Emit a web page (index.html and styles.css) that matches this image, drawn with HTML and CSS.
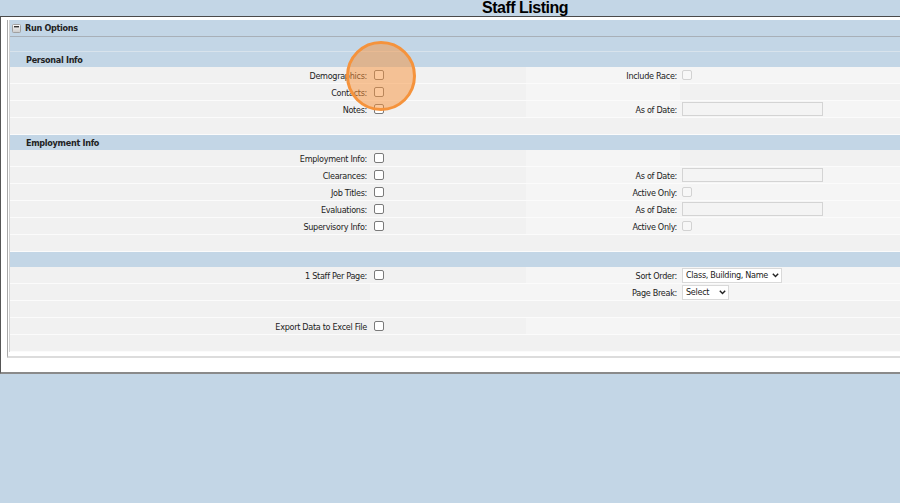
FILE: index.html
```
<!DOCTYPE html>
<html lang="en">
<head>
    <meta charset="UTF-8">
    <title>Staff Listing</title>
    <link rel="stylesheet" href="styles.css">
</head>
<body>
    <div class="pagina">
        <h1 class="titulo">Staff Listing</h1>

        <!-- Panel principal -->
        <div class="panel">
            <div class="marco">
                <div class="opciones">
                    <div class="barra-opciones">
                        <svg class="toggle" width="9" height="9" viewBox="0 0 9 9">
                            <defs>
                                <linearGradient id="grad" x1="0" y1="0" x2="0" y2="1">
                                    <stop offset="0" stop-color="#fdfdfd"/>
                                    <stop offset="1" stop-color="#c9c9c9"/>
                                </linearGradient>
                            </defs>
                            <rect x="0.5" y="0.5" width="8" height="8" rx="1" fill="url(#grad)" stroke="#a0a0a0"/>
                            <rect x="2" y="2" width="5" height="1.4" fill="#333"/>
                        </svg>
                        <span>Run Options</span>
                    </div>
                    <div class="seccion vacia-top"></div>
                    <div class="seccion">Personal Info</div>

                    <div class="fila">
                        <label class="etq">Demographics:</label>
                        <div class="val"><input type="checkbox"></div>
                        <label class="etq2">Include Race:</label>
                        <div class="val2 lleno"><input type="checkbox" disabled></div>
                    </div>
                    <div class="fila">
                        <label class="etq">Contacts:</label>
                        <div class="val"><input type="checkbox"></div>
                        <label class="etq2"></label>
                        <div class="val2"></div>
                    </div>
                    <div class="fila">
                        <label class="etq">Notes:</label>
                        <div class="val"><input type="checkbox"></div>
                        <label class="etq2">As of Date:</label>
                        <div class="val2 lleno"><input type="text" class="fecha" disabled></div>
                    </div>
                    <div class="fila-vacia"></div>

                    <div class="seccion">Employment Info</div>
                    <div class="fila">
                        <label class="etq">Employment Info:</label>
                        <div class="val"><input type="checkbox"></div>
                        <label class="etq2"></label>
                        <div class="val2"></div>
                    </div>
                    <div class="fila">
                        <label class="etq">Clearances:</label>
                        <div class="val"><input type="checkbox"></div>
                        <label class="etq2">As of Date:</label>
                        <div class="val2 lleno"><input type="text" class="fecha" disabled></div>
                    </div>
                    <div class="fila">
                        <label class="etq">Job Titles:</label>
                        <div class="val"><input type="checkbox"></div>
                        <label class="etq2">Active Only:</label>
                        <div class="val2 lleno"><input type="checkbox" disabled></div>
                    </div>
                    <div class="fila">
                        <label class="etq">Evaluations:</label>
                        <div class="val"><input type="checkbox"></div>
                        <label class="etq2">As of Date:</label>
                        <div class="val2 lleno"><input type="text" class="fecha" disabled></div>
                    </div>
                    <div class="fila">
                        <label class="etq">Supervisory Info:</label>
                        <div class="val"><input type="checkbox"></div>
                        <label class="etq2">Active Only:</label>
                        <div class="val2 lleno"><input type="checkbox" disabled></div>
                    </div>
                    <div class="fila-vacia"></div>

                    <div class="seccion"></div>
                    <div class="fila">
                        <label class="etq">1 Staff Per Page:</label>
                        <div class="val"><input type="checkbox"></div>
                        <label class="etq2">Sort Order:</label>
                        <div class="val2 lleno">
                            <div class="combo">
                                <select><option>Class, Building, Name</option></select>
                                <svg width="7" height="5" viewBox="0 0 7 5"><path d="M0.8 0.8 L3.5 3.6 L6.2 0.8" fill="none" stroke="#222" stroke-width="1.4"/></svg>
                            </div>
                        </div>
                    </div>
                    <div class="fila">
                        <label class="etq"></label>
                        <div class="val claro"></div>
                        <label class="etq2">Page Break:</label>
                        <div class="val2 lleno">
                            <div class="combo combo-corto">
                                <select><option>Select</option></select>
                                <svg width="7" height="5" viewBox="0 0 7 5"><path d="M0.8 0.8 L3.5 3.6 L6.2 0.8" fill="none" stroke="#222" stroke-width="1.4"/></svg>
                            </div>
                        </div>
                    </div>
                    <div class="fila-vacia"></div>
                    <div class="fila">
                        <label class="etq">Export Data to Excel File</label>
                        <div class="val"><input type="checkbox"></div>
                        <label class="etq2"></label>
                        <div class="val2"></div>
                    </div>
                    <div class="fila-vacia"></div>
                </div>
            </div>
        </div>
    </div>

    <!-- Marca del clic -->
    <div class="clic"></div>
</body>
</html>
```

FILE: styles.css
```
/* Estilo general */
body {
    margin: 0;
    background-color: #c3d6e6;
    font-family: "DejaVu Sans Condensed", "Liberation Sans", sans-serif;
    font-size: 9px;
    letter-spacing: -0.3px;
    color: #222;
    overflow: hidden;
}

/* Título */
.titulo {
    margin: 0;
    height: 16px;
    padding-left: 150px;
    font-family: "Liberation Sans", Arial, sans-serif;
    font-size: 16px;
    line-height: 16px;
    letter-spacing: -0.5px;
    text-align: center;
    color: #000;
}

/* Panel blanco */
.panel {
    background-color: #fff;
    border-top: 1px solid #4a4a4a;
    border-left: 1px solid #555;
    border-bottom: 2px solid #8a8a8a;
    padding: 3px 0 14px 6px;
}

.marco {
    border-left: 1px solid #a9a9a9;
    border-bottom: 2px solid #dcdcdc;
    padding: 0 0 4px 1px;
}

.opciones {
    border-left: 1px solid #d2d2d2;
}

/* Barra de opciones */
.barra-opciones {
    display: flex;
    align-items: center;
    gap: 4px;
    height: 16px;
    padding-left: 2px;
    background-color: #c3d6e6;
    border-bottom: 1px solid #a8b0b8;
    font-weight: bold;
}

.toggle {
    display: block;
}

/* Encabezados de sección */
.seccion {
    height: 15px;
    line-height: 16px;
    padding-left: 16px;
    background-color: #c3d6e6;
    font-weight: bold;
}

.vacia-top {
    height: 14px;
    border-bottom: 1px solid #d8e3ec;
}

/* Filas del formulario */
.fila {
    display: grid;
    grid-template-columns: 360px 156px 154px 1fr;
    height: 16px;
    border-bottom: 1px solid #fbfbfb;
    background-color: #f1f1f1;
}

.fila-vacia {
    height: 16px;
    border-bottom: 1px solid #fbfbfb;
    background-color: #f1f1f1;
}

.etq,
.etq2 {
    display: flex;
    align-items: center;
    justify-content: flex-end;
    padding: 2px 3px 0 0;
    white-space: nowrap;
}

.etq2 {
    background-color: #f5f5f5;
}

.val,
.val2 {
    display: flex;
    align-items: center;
    padding-left: 2px;
}

.val {
    padding-left: 4px;
}

.claro,
.lleno {
    background-color: #f5f5f5;
}

/* Casillas */
input[type="checkbox"] {
    appearance: none;
    margin: 0;
    width: 10px;
    height: 10px;
    border: 1px solid #7a7a7a;
    border-radius: 2px;
    background-color: #fff;
}

input[type="checkbox"]:disabled {
    border-color: #d2d2d2;
    background-color: #f7f7f7;
}

/* Campo de fecha */
.fecha {
    box-sizing: border-box;
    width: 141px;
    height: 14px;
    margin: 0;
    padding: 0;
    border: 1px solid #d4d4d4;
    background-color: #f4f4f4;
}

/* Listas desplegables */
.combo {
    display: flex;
    align-items: center;
    gap: 2px;
    box-sizing: border-box;
    width: 100px;
    height: 15px;
    border: 1px solid #d9d9d9;
    background-color: #fff;
    padding: 0 2px 0 3px;
}

.combo-corto {
    width: 47px;
}

.combo select {
    appearance: none;
    flex: 1;
    min-width: 0;
    border: none;
    background: transparent;
    padding: 0;
    margin: 0;
    font-family: inherit;
    font-size: 9px;
    letter-spacing: -0.3px;
    color: #222;
}

.combo svg {
    display: block;
}

/* Marca del clic */
.clic {
    position: absolute;
    left: 346px;
    top: 41px;
    width: 64px;
    height: 64px;
    border: 3px solid #f5933c;
    border-radius: 50%;
    background-color: rgba(247, 146, 58, 0.5);
}
```
